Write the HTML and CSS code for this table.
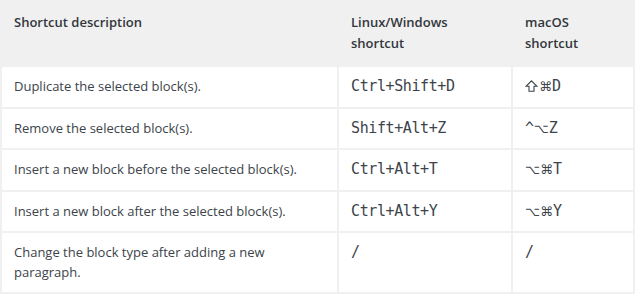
FILE: index.html
```html
<!DOCTYPE html>
<html lang="en">
<head>
  <meta charset="UTF-8" />
  <title>Keyboard shortcuts</title>
  <link rel="stylesheet" href="styles.css">
</head>
<body>
  <table class="shortcuts">
    <thead>
      <tr>
        <th class="col-desc">Shortcut description</th>
        <th class="col-win">Linux/Windows shortcut</th>
        <th class="col-mac">macOS shortcut</th>
      </tr>
    </thead>
    <tbody>
      <tr>
        <td>Duplicate the selected block(s).</td>
        <td><kbd>Ctrl+Shift+D</kbd></td>
        <td><kbd><svg class="shift" width="13" height="12" viewBox="0 0 13 12" aria-label="Shift"><path d="M6.5 0.8 L12 6.3 H9 V11.2 H4 V6.3 H1 Z" fill="none" stroke="#3c434a" stroke-width="1.1" stroke-linejoin="miter"/></svg><span class="sym">⌘</span>D</kbd></td>
      </tr>
      <tr>
        <td>Remove the selected block(s).</td>
        <td><kbd>Shift+Alt+Z</kbd></td>
        <td><kbd>^<span class="sym">⌥</span>Z</kbd></td>
      </tr>
      <tr>
        <td>Insert a new block before the selected block(s).</td>
        <td><kbd>Ctrl+Alt+T</kbd></td>
        <td><kbd><span class="sym">⌥⌘</span>T</kbd></td>
      </tr>
      <tr>
        <td>Insert a new block after the selected block(s).</td>
        <td><kbd>Ctrl+Alt+Y</kbd></td>
        <td><kbd><span class="sym">⌥⌘</span>Y</kbd></td>
      </tr>
      <tr>
        <td>Change the block type after adding a new paragraph.</td>
        <td><kbd>/</kbd></td>
        <td><kbd>/</kbd></td>
      </tr>
    </tbody>
  </table>
</body>
</html>
```

FILE: styles.css
```css
* {
  margin: 0;
  padding: 0;
  box-sizing: border-box;
}

body {
  background: #fff;
  font-family: 'Open Sans', sans-serif;
  font-size: 13px;
  color: #3c434a;
}

.shortcuts {
  width: 635px;
  border-collapse: collapse;
  table-layout: fixed;
}

.shortcuts th,
.shortcuts td {
  border: 2px solid #f0f0f0;
  text-align: left;
  vertical-align: top;
}

.shortcuts th {
  background: #f0f0f0;
  font-weight: 600;
  color: #32373c;
  line-height: 21px;
  padding: 10px 12px 11px;
}

.shortcuts td {
  line-height: 19.5px;
  padding: 10px 12px;
}

.col-desc { width: 337px; }
.col-win { width: 174px; }

kbd {
  font-family: 'DejaVu Sans Mono', monospace;
  font-size: 15px;
  letter-spacing: -0.4px;
  color: #3c434a;
}

kbd .sym {
  font-family: 'DejaVu Sans', sans-serif;
  font-size: 13px;
  letter-spacing: 0;
}

kbd .shift {
  vertical-align: -1px;
  margin-right: 1px;
}
```
